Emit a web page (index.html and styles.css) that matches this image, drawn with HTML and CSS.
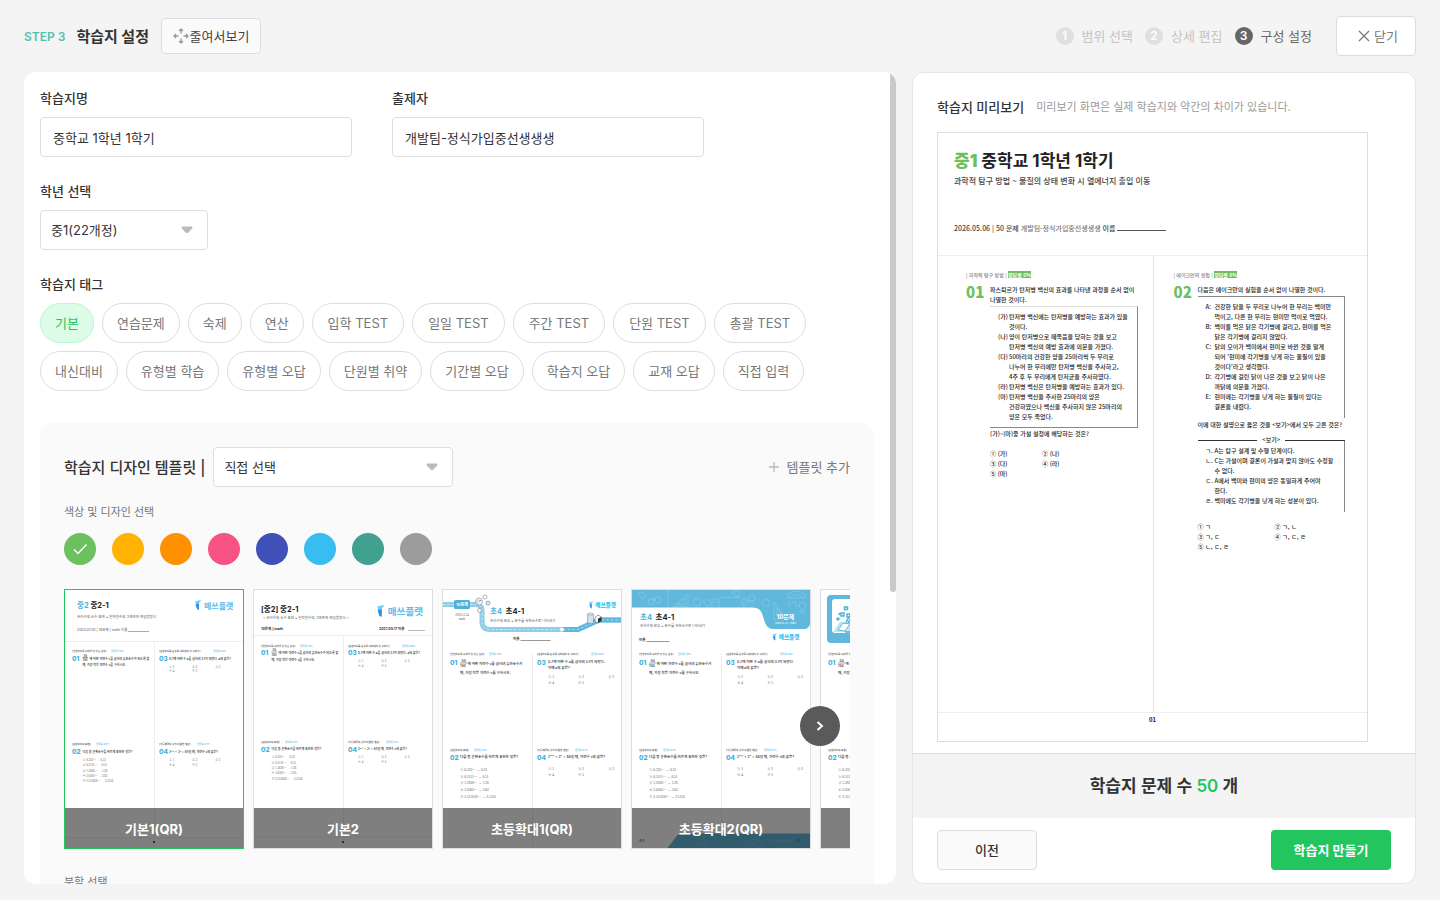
FILE: index.html
```html
<!DOCTYPE html>
<html lang="ko">
<head>
    <meta charset="UTF-8">
    <title>학습지 설정</title>
    <link rel="stylesheet" href="styles.css">
</head>
<body>
<!-- 썸네일 공통 도형 -->
<svg class="defs" width="0" height="0" aria-hidden="true">
    <defs>
        <symbol id="logo" viewBox="0 0 80 20" overflow="visible">
            <path d="M1 2 L13 0 L8 6 L1 9z" fill="#6fd0f5"/>
            <path d="M1 9 L8 6 L8 20 L4 18z" fill="#2f8fe8"/>
            <text x="18" y="17" font-size="16" font-weight="700" fill="currentColor">매쓰플랫</text>
        </symbol>
        <g id="q-top">
            <g class="tag"><text x="14" y="124">[유한소수로 나타낼 수 있는 분수]</text><text class="rate" x="92" y="124">정답률 70%</text></g>
            <text class="num" x="14" y="141">01</text>
            <g class="q">
                <text x="37" y="133">55</text><path d="M35 135h11" stroke="#444"/><text x="35" y="142">150</text>
                <text x="49" y="139">에 어떤 자연수 x를 곱하여 유한소수가 되도록 할</text>
                <text x="35" y="152">때, 가장 작은 자연수 x를 구하시오.</text>
            </g>
            <g class="tag"><text x="188" y="124">[순환소수를 분수로 나타내어 수 구하기]</text><text class="rate" x="296" y="124">정답률 69%</text></g>
            <text class="num" x="188" y="141">03</text>
            <text class="q" x="208" y="139">0.7에 어떤 수 a를 곱하여 3.1이 되었다. a의 값은?</text>
            <g class="opt"><text x="208" y="155">① 1</text><text x="254" y="155">② 2</text><text x="300" y="155">③ 3</text><text x="208" y="164">④ 4</text><text x="254" y="164">⑤ 5</text></g>
        </g>
        <g id="q-bottom">
            <g class="tag"><text x="14" y="310">[순환소수의 표현]</text><text class="rate" x="62" y="310">정답률 83%</text></g>
            <text class="num" x="14" y="328">02</text>
            <text class="q" x="35" y="325">다음 중 순환소수를 바르게 표현한 것은?</text>
            <g class="opt"><text x="35" y="341">① 0.333⋯ → 0.33</text><text x="35" y="352">② 0.5111⋯ → 0.51</text><text x="35" y="363">③ 1.2626⋯ → 1.26</text><text x="35" y="373">④ 3.0303⋯ → 3.03</text><text x="35" y="384">⑤ 2.515656⋯ → 2.5156</text></g>
            <g class="tag"><text x="188" y="310">[거듭제곱의 성질 이용한 계산]</text><text class="rate" x="264" y="310">정답률 87%</text></g>
            <text class="num" x="188" y="328">04</text>
            <text class="q" x="208" y="325">2ˣ⁺¹ + 2ˣ = 48일 때, 자연수 x의 값은?</text>
            <g class="opt"><text x="208" y="341">① 1</text><text x="254" y="341">② 2</text><text x="300" y="341">③ 3</text><text x="208" y="351">④ 4</text><text x="254" y="351">⑤ 5</text></g>
        </g>
        <g id="q-large">
            <g class="tag"><text x="14" y="129">[유한소수로 나타낼 수 있는 분수]</text><text class="rate" x="92" y="129">정답률 70%</text><text x="188" y="129">[순환소수를 분수로 나타내어 수 구하기]</text><text class="rate" x="296" y="129">정답률 69%</text></g>
            <text class="num" x="14" y="149">01</text>
            <g class="q big">
                <text x="37" y="143">55</text><path d="M34 146h14" stroke="#444"/><text x="34" y="154">150</text>
                <text x="49" y="149">에 어떤 자연수 x를 곱하여 유한소수가</text>
                <text x="34" y="168">때, 가장 작은 자연수 x를 구하시오.</text>
                <text x="210" y="145">0.7에 어떤 수 a를 곱하여 3.1이 되었다.</text>
                <text x="210" y="157">이때 a의 값은?</text>
            </g>
            <text class="num" x="188" y="149">03</text>
            <g class="opt big"><text x="210" y="175">① 1</text><text x="270" y="175">② 2</text><text x="330" y="175">③ 3</text><text x="210" y="187">④ 4</text><text x="270" y="187">⑤ 5</text></g>
            <g class="tag"><text x="14" y="321">[순환소수의 표현]</text><text class="rate" x="62" y="321">정답률 83%</text><text x="188" y="321">[거듭제곱의 성질 이용한 계산]</text><text class="rate" x="264" y="321">정답률 87%</text></g>
            <text class="num" x="14" y="339">02</text>
            <text class="q big" x="34" y="336">다음 중 순환소수를 바르게 표현한 것은?</text>
            <g class="opt big"><text x="34" y="361">① 0.333⋯ → 0.33</text><text x="34" y="375">② 0.5111⋯ → 0.51</text><text x="34" y="388">③ 1.2626⋯ → 1.26</text><text x="34" y="402">④ 3.0303⋯ → 3.03</text><text x="34" y="416">⑤ 2.515656⋯ → 2.5156</text></g>
            <text class="num" x="188" y="339">04</text>
            <text class="q big" x="210" y="336">2ˣ⁺¹ + 2ˣ = 48일 때, 자연수 x의 값은?</text>
            <g class="opt big"><text x="210" y="360">① 1</text><text x="270" y="360">② 2</text><text x="330" y="360">③ 3</text><text x="210" y="372">④ 4</text><text x="270" y="372">⑤ 5</text></g>
            <path d="M179 126V516" stroke="#ececec" stroke-width="2"/>
        </g>
    </defs>
</svg>

<header class="header">
    <span class="step-no">STEP 3</span>
    <h1>학습지 설정</h1>
    <button type="button" class="btn-shrink">
        <svg width="16" height="16" viewBox="0 0 16 16" fill="none" stroke="#9a9a9a" stroke-width="1.3">
            <path d="M8 1v4.500M6 3l2-2 2 2M8 15v-4.500M6 13l2 2 2-2M1 8h4.500M3 6L1 8l2 2M15 8h-4.500M13 6l2 2-2 2"/>
        </svg>줄여서보기
    </button>
    <ol class="steps">
        <li><em>1</em>범위 선택</li>
        <li><em>2</em>상세 편집</li>
        <li class="current"><em>3</em>구성 설정</li>
    </ol>
    <button type="button" class="btn-close">
        <svg width="12" height="12" viewBox="0 0 12 12" stroke="#777" stroke-width="1.2"><path d="M1 1l10 10M11 1L1 11"/></svg>닫기
    </button>
</header>

<main class="main">
    <section class="setting">
        <div class="setting-scroll">
            <div class="fields">
                <div class="field">
                    <label for="title">학습지명</label>
                    <input type="text" id="title" value="중학교 1학년 1학기">
                </div>
                <div class="field">
                    <label for="author">출제자</label>
                    <input type="text" id="author" value="개발팀-정식가입중선생생생">
                </div>
            </div>
            <div class="field">
                <label for="grade">학년 선택</label>
                <select id="grade" class="grade"><option>중1(22개정)</option></select>
            </div>
            <div class="field">
                <h2 class="label">학습지 태그</h2>
                <div class="tags">
                    <button type="button" class="on">기본</button>
                    <button type="button">연습문제</button>
                    <button type="button">숙제</button>
                    <button type="button">연산</button>
                    <button type="button" class="test">입학 TEST</button>
                    <button type="button" class="test">일일 TEST</button>
                    <button type="button" class="test">주간 TEST</button>
                    <button type="button" class="test">단원 TEST</button>
                    <button type="button" class="test">총괄 TEST</button>
                </div>
                <div class="tags">
                    <button type="button">내신대비</button>
                    <button type="button">유형별 학습</button>
                    <button type="button">유형별 오답</button>
                    <button type="button">단원별 취약</button>
                    <button type="button">기간별 오답</button>
                    <button type="button">학습지 오답</button>
                    <button type="button">교재 오답</button>
                    <button type="button">직접 입력</button>
                </div>
            </div>

            <div class="design">
                <div class="design-head">
                    <label for="template">학습지 디자인 템플릿 |</label>
                    <select id="template" class="template"><option>직접 선택</option></select>
                    <button type="button" class="btn-add">
                        <svg width="10" height="10" viewBox="0 0 10 10" stroke="#bbb" stroke-width="1.3"><path d="M5 0v10M0 5h10"/></svg>템플릿 추가
                    </button>
                </div>
                <p class="sub">색상 및 디자인 선택</p>
                <div class="colors">
                    <input type="radio" name="color" class="c1" aria-label="초록" checked>
                    <input type="radio" name="color" class="c2" aria-label="노랑">
                    <input type="radio" name="color" class="c3" aria-label="주황">
                    <input type="radio" name="color" class="c4" aria-label="분홍">
                    <input type="radio" name="color" class="c5" aria-label="남색">
                    <input type="radio" name="color" class="c6" aria-label="하늘">
                    <input type="radio" name="color" class="c7" aria-label="청록">
                    <input type="radio" name="color" class="c8" aria-label="회색">
                </div>
                <div class="carousel">
                    <div class="thumbs">
                        <button type="button" class="thumb on">
                            <svg viewBox="0 0 356 516">
                                <text x="24" y="36" class="tt"><tspan fill="#4db3d9">중2</tspan> 중2-1</text>
                                <use href="#logo" x="260" y="20" width="80" height="20" color="#5cbdea"/>
                                <text x="24" y="55" class="st">유리수의 소수 표현 ~ 일차함수의 그래프와 연립방정식</text>
                                <text x="24" y="82" class="st">2020.07.20 | 10문제 | math 이름</text>
                                <path d="M126 83h42" stroke="#555"/>
                                <path d="M0 103h356M179 103v393M0 496h356" stroke="#ededed" stroke-width="2"/>
                                <use href="#q-top"/><use href="#q-bottom"/>
                                <circle cx="178" cy="504" r="2" fill="#222"/>
                            </svg>
                            <span>기본1(QR)</span>
                        </button>
                        <button type="button" class="thumb">
                            <svg viewBox="0 0 356 516">
                                <text x="14" y="44" class="tt">[중2] 중2-1</text>
                                <use href="#logo" x="246" y="28" width="96" height="28" color="#5cbdea"/>
                                <text x="18" y="58" class="st">&lt; 유리수의 소수 표현 ~ 일차함수의 그래프와 연립방정식 &gt;</text>
                                <text x="14" y="80" class="st b">10문제 | math</text>
                                <text x="250" y="80" class="st b">2021.05.17 이름</text>
                                <path d="M308 81h34" stroke="#777"/>
                                <path d="M0 91h356M179 91v405M0 494h356" stroke="#ededed" stroke-width="2"/>
                                <use href="#q-top" y="-11"/><use href="#q-bottom" y="-5"/>
                                <circle cx="178" cy="504" r="2" fill="#222"/>
                            </svg>
                            <span>기본2</span>
                        </button>
                        <button type="button" class="thumb">
                            <svg viewBox="0 0 356 516">
                                <g fill="none">
                                    <path d="M0 29H66Q77 29 78 41V62Q78 79 94 79H270L312 60H356" stroke="#8fcdea" stroke-width="10"/>
                                    <path d="M238 79H270L312 60H356" stroke="#5fb6dc" stroke-width="10"/>
                                    <path d="M0 29H66Q77 29 78 41V62Q78 79 94 79H270L312 60H356" stroke="#fff" stroke-dasharray="5 4"/>
                                </g>
                                <rect x="22" y="20" width="32" height="18" rx="3" fill="#50b0d8"/>
                                <text x="38" y="32" font-size="8" font-weight="700" fill="#fff" text-anchor="middle">10문제</text>
                                <g class="opt" text-anchor="middle"><text x="38" y="51">2020.12.24</text><text x="38" y="59">math</text></g>
                                <g fill="#fff" stroke="#666"><circle cx="72" cy="23" r="7"/><path d="M66 24q5-7 11-2M68 28l8-8"/><circle cx="84" cy="14" r="4"/><circle cx="90" cy="26" r="4" fill="#cfeaf7"/><circle cx="73" cy="41" r="4"/></g>
                                <path d="M289 48v17q6 4 12 0V48" fill="#cfe4ee" stroke="#778"/><ellipse cx="295" cy="48" rx="6" ry="2" fill="#eef6fa" stroke="#778"/>
                                <path d="M304 55l6-5 7 4v8l-7 4-6-3z" fill="#fff" stroke="#333"/><path d="M310 57l7-3v8l-7 4z" fill="#333"/>
                                <circle cx="238" cy="79" r="4" fill="#fff"/>
                                <text x="94" y="47" class="tt"><tspan fill="#4db3d9">초4</tspan>&#160; 초4-1</text>
                                <text x="94" y="63" class="st">유리수의 분류 ~ 분수를 유한소수로 나타내기</text>
                                <use href="#logo" x="292" y="23" width="56" height="14" color="#00bdf2"/>
                                <text x="140" y="100" class="st b">이름</text><path d="M155 101h60" stroke="#333"/>
                                <use href="#q-large"/>
                            </svg>
                            <span>초등확대1(QR)</span>
                        </button>
                        <button type="button" class="thumb">
                            <svg viewBox="0 0 356 516">
                                <path d="M0 0H356V68Q354 78 344 78H282Q270 78 266 65L260 47Q256 35 242 35H0z" fill="#60b8dd"/>
                                <g fill="none" stroke="#93d0ea">
                                    <path d="M12 8l8-4 8 7-5 8zM34 24l6-8 8 3M72 0v35M82 33L112 8V33zM90 29l16-12v12zM142 22l8-4 8 9-8 6zM160 35V18h14v17M160 24h14M200 6l6-6 10 2-4 12zM222 32l8-12 12 6M284 60V24l22 30zM290 52V36l9 14zM314 34V24h14v10M310 16a20 20 0 0 1 38 0zM318 16a12 12 0 0 1 22 0M176 15h42"/>
                                    <circle cx="38" cy="24" r="6"/><circle cx="52" cy="20" r="6"/><circle cx="130" cy="24" r="8"/><circle cx="226" cy="24" r="7"/><circle cx="240" cy="16" r="6"/><circle cx="268" cy="26" r="7"/><circle cx="341" cy="32" r="7"/><path d="M338 40v6h6v-6"/>
                                </g>
                                <text x="307" y="58" font-size="12" font-weight="700" fill="#fff" text-anchor="middle">10문제</text>
                                <text x="307" y="68" font-size="5" fill="#fff" text-anchor="middle">2020.12.24 | math</text>
                                <text x="16" y="60" class="tt"><tspan fill="#4db3d9">초4</tspan>&#160; 초4-1</text>
                                <text x="16" y="74" class="st">유리수의 분류 ~ 분수를 유한소수로 나타내기</text>
                                <use href="#logo" x="281" y="87" width="56" height="14" color="#00bdf2"/>
                                <text x="14" y="102" class="st b">이름</text><path d="M29 103h46" stroke="#333"/>
                                <use href="#q-large"/>
                                <path d="M71 516L88 494Q92 487 100 487H356V516z" fill="#60b8dd"/>
                                <path d="M130 508l10-12 12 12zM225 516a18 18 0 0 1 36 0M234 516a9 9 0 0 1 18 0M280 502h40" fill="none" stroke="#93d0ea"/>
                                <text x="14" y="504" class="st">초4</text><text x="329" y="504" class="st">01</text>
                            </svg>
                            <span>초등확대2(QR)</span>
                        </button>
                        <button type="button" class="thumb">
                            <svg viewBox="0 0 356 516">
                                <rect x="12" y="10" width="332" height="96" rx="8" fill="#60b8dd"/>
                                <rect x="22" y="18" width="312" height="68" rx="6" fill="#fff"/>
                                <path d="M25 84l12-20h40v20z" fill="#bfe4f4"/>
                                <path d="M34 80l10-14 14 2-10 14z" fill="#fff" stroke="#60b8dd" stroke-width="2"/>
                                <path d="M50 64l14-22M54 66l14-22M48 84h20" stroke="#4db3d9" stroke-width="3"/>
                                <g fill="none" stroke="#4db3d9" stroke-width="3"><path d="M40 46h6v6h-6zM52 48h7v6h-7zM47 34h6v5h-6z"/><circle cx="34" cy="58" r="2"/><circle cx="37" cy="48" r="1"/></g>
                                <use href="#q-large"/>
                            </svg>
                            <span></span>
                        </button>
                    </div>
                    <button type="button" class="btn-next" aria-label="다음">
                        <svg width="8" height="10" viewBox="0 0 8 10" fill="none" stroke="#fff" stroke-width="2"><path d="M1.500 1L6 5 1.500 9"/></svg>
                    </button>
                </div>
                <p class="sub split">분할 선택</p>
            </div>
        </div>
        <div class="scrollbar"></div>
    </section>

    <section class="preview">
        <div class="preview-body">
            <div class="preview-head">
                <h2>학습지 미리보기</h2>
                <p>미리보기 화면은 실제 학습지와 약간의 차이가 있습니다.</p>
            </div>
            <article class="sheet">
                <div class="sheet-head">
                    <h3><b>중1</b> 중학교 1학년 1학기</h3>
                    <p class="range">과학적 탐구 방법 ~ 물질의 상태 변화 시 열에너지 출입 이동</p>
                    <p class="info">2026.05.06 | 50 문제 <span>개발팀-정식가입중선생생생</span> 이름 <i></i></p>
                </div>
                <div class="sheet-cols">
                    <div class="col">
                        <p class="unit">| 과학적 탐구 방법 | <mark>정답률 0%</mark></p>
                        <div class="question">
                            <strong>01</strong>
                            <div class="text">
                                <p>파스퇴르가 탄저병 백신의 효과를 나타낸 과정을 순서 없이<br>나열한 것이다.</p>
                                <dl class="box box1">
                                    <dt>(가)</dt><dd>탄저병 백신에는 탄저병을 예방하는 효과가 있을<br>것이다.</dd>
                                    <dt>(나)</dt><dd>양이 탄저병으로 떼죽음을 당하는 것을 보고<br>탄저병 백신의 예방 효과에 의문을 가졌다.</dd>
                                    <dt>(다)</dt><dd>50마리의 건강한 양을 25마리씩 두 무리로<br>나누어 한 무리에만 탄저병 백신을 주사하고,<br>4주 후 두 무리에게 탄저균을 주사하였다.</dd>
                                    <dt>(라)</dt><dd>탄저병 백신은 탄저병을 예방하는 효과가 있다.</dd>
                                    <dt>(마)</dt><dd>탄저병 백신을 주사한 25마리의 양은<br>건강하였으나 백신을 주사하지 않은 25마리의<br>양은 모두 죽었다.</dd>
                                </dl>
                                <p>(가)~(마)중 가설 설정에 해당하는 것은?</p>
                                <ul class="answers answers1">
                                    <li>① (가)</li><li>② (나)</li><li>③ (다)</li><li>④ (라)</li><li>⑤ (마)</li>
                                </ul>
                            </div>
                        </div>
                    </div>
                    <div class="col">
                        <p class="unit">| 에이크만의 실험 | <mark>정답률 0%</mark></p>
                        <div class="question">
                            <strong>02</strong>
                            <div class="text">
                                <p>다음은 에이크만의 실험을 순서 없이 나열한 것이다.</p>
                                <dl class="box box2">
                                    <dt>A:</dt><dd>건강한 닭을 두 무리로 나누어 한 무리는 백미만<br>먹이고, 다른 한 무리는 현미만 먹이로 먹였다.</dd>
                                    <dt>B:</dt><dd>백미를 먹은 닭은 각기병에 걸리고, 현미를 먹은<br>닭은 각기병에 걸리지 않았다.</dd>
                                    <dt>C:</dt><dd>닭의 모이가 백미에서 현미로 바뀐 것을 알게<br>되어 '현미에 각기병을 낫게 하는 물질이 있을<br>것이다'라고 생각했다.</dd>
                                    <dt>D:</dt><dd>각기병에 걸린 닭이 나은 것을 보고 닭이 나은<br>까닭에 의문을 가졌다.</dd>
                                    <dt>E:</dt><dd>현미에는 각기병을 낫게 하는 물질이 있다는<br>결론을 내렸다.</dd>
                                </dl>
                                <p>이에 대한 설명으로 옳은 것을 &lt;보기&gt;에서 모두 고른 것은?</p>
                                <p class="legend">&lt;보기&gt;</p>
                                <dl class="box box3">
                                    <dt>ㄱ.</dt><dd>A는 탐구 설계 및 수행 단계이다.</dd>
                                    <dt>ㄴ.</dt><dd>C는 가설이며 결론이 가설과 맞지 않아도 수정할<br>수 없다.</dd>
                                    <dt>ㄷ.</dt><dd>A에서 백미와 현미의 양은 동일하게 주어야<br>한다.</dd>
                                    <dt>ㄹ.</dt><dd>백미에도 각기병을 낫게 하는 성분이 있다.</dd>
                                </dl>
                                <ul class="answers answers2">
                                    <li>① ㄱ</li><li>② ㄱ, ㄴ</li><li>③ ㄱ, ㄷ</li><li>④ ㄱ, ㄷ, ㄹ</li><li>⑤ ㄴ, ㄷ, ㄹ</li>
                                </ul>
                            </div>
                        </div>
                    </div>
                </div>
                <p class="page">01</p>
            </article>
        </div>
        <p class="count">학습지 문제 수 <b>50</b> 개</p>
        <div class="actions">
            <button type="button" class="btn-prev">이전</button>
            <button type="button" class="btn-make">학습지 만들기</button>
        </div>
    </section>
</main>
</body>
</html>
```
FILE: styles.css
```css
* {
    box-sizing: border-box;
    margin: 0;
    padding: 0;
    list-style: none;
}

body {
    display: flex;
    flex-direction: column;
    height: 100vh;
    overflow: hidden;
    background: #f4f4f4;
    color: #333;
    font: 13px/21px Inter, "Noto Sans CJK KR", sans-serif;
}

button, input, select {
    font: inherit;
    color: inherit;
}

button {
    cursor: pointer;
}

em, i {
    font-style: normal;
}

.defs {
    position: absolute;
}

/* 상단 */
.header {
    display: flex;
    flex: none;
    align-items: center;
    height: 72px;
    padding: 0 24px;
}

.step-no {
    color: #52c1ae;
    font-size: 12px;
    font-weight: 600;
}

.header h1 {
    margin: 0 12px 0 11px;
    font-size: 15px;
    font-weight: 700;
}

.btn-shrink, .btn-close {
    display: flex;
    align-items: center;
    justify-content: center;
    border: 1px solid #ddd;
    border-radius: 4px;
}

.btn-shrink {
    gap: 1px;
    width: 100px;
    height: 36px;
    background: #fafafa;
    color: #444;
}

.btn-close {
    gap: 4px;
    width: 80px;
    height: 40px;
    padding-left: 4px;
    background: #fff;
    color: #777;
}

.steps {
    display: flex;
    gap: 12px;
    margin: 0 24px 0 auto;
}

.steps li {
    display: flex;
    align-items: center;
    gap: 8px;
    color: #c4c4c4;
}

.steps em {
    width: 18px;
    height: 18px;
    border-radius: 50%;
    background: #e0e0e0;
    color: #fff;
    font-size: 12px;
    font-weight: 600;
    line-height: 18px;
    text-align: center;
}

.steps .current {
    color: #666;
}

.steps .current em {
    background: #666;
}

/* 본문 */
.main {
    display: grid;
    flex: 1;
    grid-template-columns: 872fr 504fr;
    gap: 16px;
    min-height: 0;
    padding: 0 24px 16px;
}

.setting {
    position: relative;
    min-width: 0;
    min-height: 0;
    border-radius: 12px;
    background: #fff;
    overflow: hidden;
}

.setting-scroll {
    height: 100%;
    padding: 16px 22px 16px 16px;
    overflow-x: hidden;
    overflow-y: auto;
    scrollbar-width: none;
}

.scrollbar {
    position: absolute;
    top: 0;
    right: 0;
    width: 6px;
    height: 64%;
    border-radius: 3px;
    background: #c9c9c9;
}

.fields {
    display: flex;
    gap: 40px;
}

.field {
    display: flex;
    flex-direction: column;
    align-items: flex-start;
    gap: 8px;
    margin-bottom: 24px;
}

.field label, .label {
    font-size: 13px;
    font-weight: 500;
}

.field input {
    width: 312px;
    height: 40px;
    padding: 0 12px;
    border: 1px solid #ddd;
    border-radius: 4px;
}

select {
    height: 40px;
    padding: 0 10px;
    border: 1px solid #ddd;
    border-radius: 4px;
    appearance: none;
    background: #fff url("data:image/svg+xml,%3Csvg xmlns='http://www.w3.org/2000/svg' width='12' height='8'%3E%3Cpath d='M1 1h10v1L7 6.500H5L1 2z' fill='%23bbb' stroke='%23bbb' stroke-linejoin='round'/%3E%3C/svg%3E") no-repeat right 14px center;
}

.grade {
    width: 168px;
}

.template {
    width: 240px;
}

.tags {
    display: flex;
    flex-wrap: wrap;
    gap: 8px;
}

.tags button {
    height: 40px;
    padding: 0 14px;
    border: 1px solid #ddd;
    border-radius: 20px;
    background: #fff;
    color: #777;
}

.tags .test {
    padding: 0 15px;
}

.tags .on {
    border-color: #bbf7d0;
    background: #dcfce7;
    color: #22c55e;
}

/* 디자인 템플릿 */
.design {
    min-height: 820px;
    margin-top: 32px;
    padding: 24px;
    border-radius: 12px;
    background: #fafafa;
}

.design-head {
    display: flex;
    align-items: center;
    gap: 8px;
}

.design-head label {
    font-size: 15px;
    font-weight: 500;
}

.btn-add {
    display: flex;
    align-items: center;
    gap: 8px;
    margin-left: auto;
    border: 0;
    background: none;
    color: #777;
}

.sub {
    margin: 16px 0 12px;
    color: #777;
    font-size: 11px;
    line-height: 18px;
}

.split {
    margin-top: 24px;
}

.colors {
    display: flex;
    gap: 16px;
    margin-bottom: 24px;
}

.colors input {
    width: 32px;
    height: 32px;
    border-radius: 50%;
    appearance: none;
}

.colors input:checked {
    background-image: url("data:image/svg+xml,%3Csvg xmlns='http://www.w3.org/2000/svg' width='32' height='32'%3E%3Cpath d='M10 16.500l4 4 8.500-9' fill='none' stroke='white' stroke-width='1.500'/%3E%3C/svg%3E");
}

.c1 { background-color: #6cc05e; }
.c2 { background-color: #ffb300; }
.c3 { background-color: #ff9100; }
.c4 { background-color: #f65384; }
.c5 { background-color: #3f51b9; }
.c6 { background-color: #38bdf1; }
.c7 { background-color: #40a191; }
.c8 { background-color: #9c9c9c; }

.carousel {
    position: relative;
}

.thumbs {
    display: flex;
    gap: 9px;
    overflow: hidden;
}

.thumb {
    position: relative;
    flex: none;
    width: 180px;
    height: 260px;
    border: 1px solid #ddd;
    background: #fff;
}

.thumb.on {
    border-color: #22c55e;
}

.thumb svg {
    display: block;
    width: 100%;
    height: 100%;
    fill: #333;
}

.thumb span {
    position: absolute;
    right: 0;
    bottom: 0;
    left: 0;
    height: 40px;
    background: rgba(0, 0, 0, 0.5);
    color: #fff;
    font-weight: 700;
    line-height: 42px;
    text-align: center;
}

.tt {
    font-size: 15px;
    font-weight: 700;
    fill: #222;
}

.st {
    font-size: 7px;
    fill: #555;
}

.b {
    font-weight: 700;
    fill: #333;
}

.tag {
    font-size: 5px;
    font-weight: 500;
    fill: #444;
}

.rate {
    fill: #4db3d9;
}

.num {
    font-size: 13px;
    font-weight: 800;
    fill: #3fb0dc;
}

.q {
    font-size: 6px;
    font-weight: 500;
    fill: #222;
}

.opt {
    font-family: "Liberation Serif", "Noto Sans CJK KR", serif;
    font-size: 6px;
    fill: #555;
}

.q.big, .opt.big {
    font-size: 7px;
}

.btn-next {
    position: absolute;
    top: 50%;
    right: 10px;
    display: flex;
    align-items: center;
    justify-content: center;
    width: 40px;
    height: 40px;
    margin-top: -13px;
    border: 0;
    border-radius: 50%;
    background: #5a5a5a;
}

/* 미리보기 */
.preview {
    display: flex;
    flex-direction: column;
    min-width: 0;
    min-height: 0;
    border: 1px solid #e6e6e6;
    border-radius: 12px;
    background: #fff;
    overflow: hidden;
}

.preview-body {
    display: flex;
    flex: 1;
    flex-direction: column;
    min-height: 0;
    padding: 24px 24px 11px;
}

.preview-head {
    display: flex;
    align-items: center;
    gap: 12px;
    margin-bottom: 14px;
}

.preview-head h2 {
    font-size: 13px;
    font-weight: 500;
}

.preview-head p {
    color: #999;
    font-size: 11px;
}

.sheet {
    display: flex;
    flex: 1;
    flex-direction: column;
    align-self: flex-start;
    min-height: 0;
    aspect-ratio: 431 / 610;
    border: 1px solid #ddd;
    color: #222;
    font: 500 6px/10px "Noto Sans CJK KR", sans-serif;
}

.sheet-head {
    padding: 16px;
    height: 123px;
    border-bottom: 1px solid #eee;
}

.sheet-head h3 {
    font: 700 17px/24px Inter, "Noto Sans CJK KR", sans-serif;
}

.sheet-head h3 b {
    color: #6cc05e;
}

.range {
    color: #444;
    font-size: 8px;
    line-height: 16px;
}

.info {
    margin-top: 34px;
    color: #444;
    font-size: 7px;
}

.info span {
    color: #777;
}

.info i {
    display: inline-block;
    width: 49px;
    border-bottom: 1px solid #555;
}

.sheet-cols {
    display: grid;
    flex: 1;
    grid-template-columns: 1fr 1fr;
    min-height: 0;
    border-bottom: 1px solid #eee;
}

.col {
    padding: 14px 15px 0 28px;
}

.col + .col {
    padding-right: 22px;
    padding-left: 20px;
    border-left: 1px solid #e2e2e2;
}

.unit {
    color: #888;
    font-size: 5px;
}

.unit mark {
    background: #6cc05e;
    color: #fff;
    font-weight: 700;
}

.question {
    display: flex;
    gap: 7px;
    margin-top: 5px;
}

.question strong {
    flex: none;
    width: 17px;
    color: #6cc05e;
    font-size: 15px;
    font-weight: 900;
    line-height: 14px;
}

.text {
    flex: 1;
    min-width: 0;
    white-space: nowrap;
}

.box {
    display: grid;
    grid-template-columns: 11px 1fr;
    margin-top: 1px;
    padding: 5px 0 6px 8px;
    border: solid #888;
    border-width: 0 1px 0 0;
}

.box1 {
    margin-bottom: 1px;
    padding-bottom: 5px;
    border-top: 1px solid #ddd;
    border-bottom: 1px solid #888;
}

.box2 {
    grid-template-columns: 9px 1fr;
    margin-bottom: 2px;
    border-top-width: 1px;
}

.box3 {
    grid-template-columns: 9px 1fr;
    margin-top: -5px;
    padding-top: 6px;
}

.legend {
    display: flex;
    align-items: center;
    gap: 5px;
    margin-top: 5px;
}

.legend::before, .legend::after {
    content: "";
    flex: 1;
    border-top: 1px solid #333;
}

.answers {
    display: grid;
    margin-top: 10px;
}

.answers1 {
    grid-template-columns: 52px 1fr;
}

.answers2 {
    grid-template-columns: 77px 1fr;
}

.page {
    height: 28px;
    padding-top: 2px;
    font-weight: 700;
    text-align: center;
}

.count {
    flex: none;
    height: 65px;
    border-top: 1px solid #ddd;
    background: #f4f4f4;
    font-size: 17px;
    font-weight: 600;
    line-height: 64px;
    text-align: center;
}

.count b {
    color: #22c55e;
    font-weight: 600;
}

.actions {
    display: flex;
    flex: none;
    justify-content: space-between;
    padding: 12px 24px 13px;
}

.btn-prev, .btn-make {
    height: 40px;
    border-radius: 4px;
}

.btn-prev {
    width: 100px;
    border: 1px solid #ddd;
    background: #fafafa;
    font-weight: 500;
}

.btn-make {
    width: 120px;
    border: 0;
    background: #22c55e;
    color: #fff;
    font-weight: 700;
}
```
